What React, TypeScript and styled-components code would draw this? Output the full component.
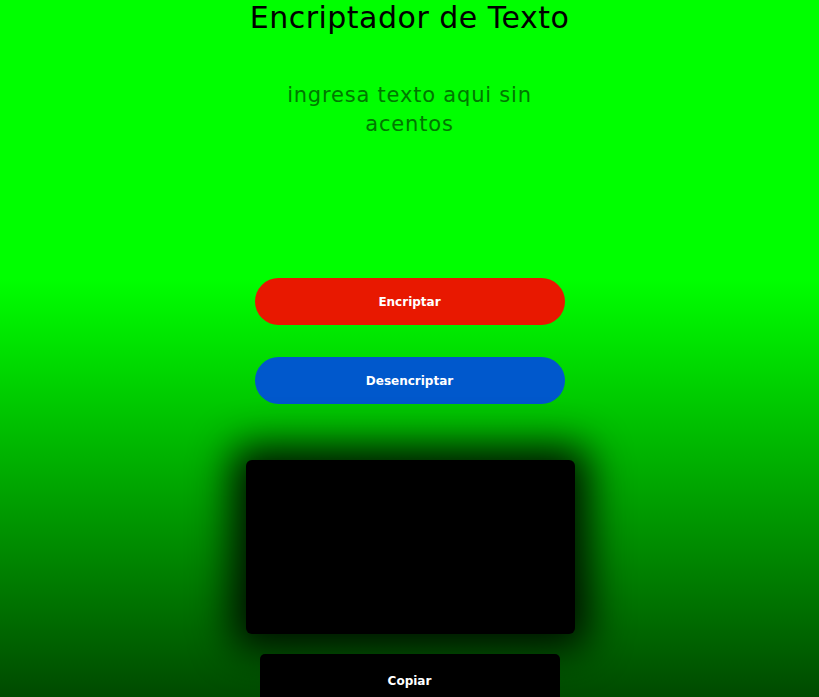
import React from 'react';
import styled, { createGlobalStyle } from 'styled-components';

const GlobalStyle = createGlobalStyle`
    * { box-sizing: border-box; }
    html, body {
        margin: 0;
        padding: 0;
    }
    body {
        font-family: "DejaVu Sans", "Liberation Sans", sans-serif;
        background: #004a00;
    }
`;

const Page = styled.main`
    height: 697px;
    display: flex;
    flex-direction: column;
    align-items: center;
    background: linear-gradient(to bottom, #00ff00 0%, #00ff00 40%, #004a00 100%);
    overflow: hidden;
`;

const Title = styled.h1`
    margin: 0;
    padding-top: 1px;
    font-size: 30px;
    font-weight: 400;
    line-height: 34px;
    color: #000;
    letter-spacing: 0.5px;
`;

const Input = styled.textarea`
    margin-top: 44px;
    width: 290px;
    height: 167px;
    flex-shrink: 0;
    border: none;
    outline: none;
    resize: none;
    background: transparent;
    text-align: center;
    font-family: inherit;
    font-size: 21px;
    line-height: 29px;
    letter-spacing: 0.8px;
    color: #006600;

    &::placeholder {
        color: #007800;
    }
`;

const Actions = styled.div`
    display: flex;
    flex-direction: column;
    gap: 32px;
    margin-top: 32px;
`;

const Pill = styled.button<{ $tone: string }>`
    width: 310px;
    height: 47px;
    border: none;
    border-radius: 24px;
    background: ${(p) => p.$tone};
    color: #fff;
    font-family: inherit;
    font-size: 12px;
    font-weight: 700;
    cursor: pointer;
`;

const Output = styled.div`
    flex-shrink: 0;
    margin-top: 56px;
    margin-left: 1px;
    width: 329px;
    height: 174px;
    background: #000;
    border-radius: 6px;
    box-shadow: 0 0 40px 14px rgba(0, 0, 0, 0.9);
`;

const CopyButton = styled.button`
    flex-shrink: 0;
    margin-top: 20px;
    width: 300px;
    height: 60px;
    padding: 0 0 6px;
    border: none;
    border-radius: 5px;
    background: #000;
    color: #fff;
    font-family: inherit;
    font-size: 12px;
    font-weight: 700;
`;

export default function App() {
    return (
        <>
            <GlobalStyle />
            <Page>
                <Title>Encriptador de Texto</Title>
                <Input placeholder="ingresa texto aqui sin acentos" />
                <Actions>
                    <Pill $tone="#e81800">Encriptar</Pill>
                    <Pill $tone="#0058cc">Desencriptar</Pill>
                </Actions>
                <Output />
                <CopyButton>Copiar</CopyButton>
            </Page>
        </>
    );
}
